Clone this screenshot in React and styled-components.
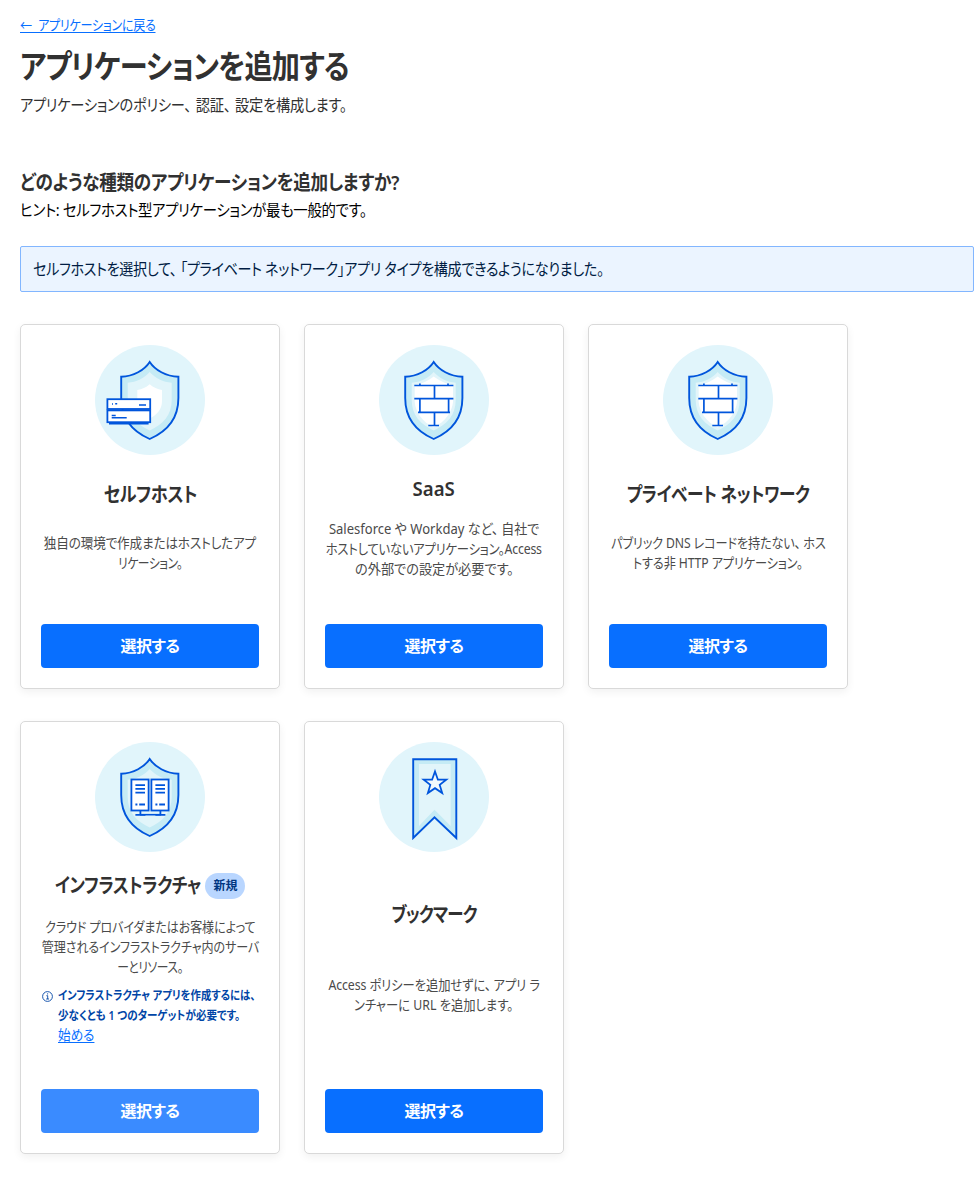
import React, { Fragment } from 'react';
import styled, { createGlobalStyle } from 'styled-components';

const GlobalStyle = createGlobalStyle`
  * { box-sizing: border-box; }
  body {
    margin: 0;
    background: #fff;
    color: #313131;
    font-family: "Noto Sans", "Noto Sans CJK JP", sans-serif;
    font-size: 16px;
    font-feature-settings: "palt";
    overflow-x: hidden;
  }
  h1, h2, h3, p { margin: 0; }
`;

const Page = styled.main`
  display: flex;
  flex-direction: column;
  padding: 15px 4px 36px 20px;
`;

/* A single line of text set in condensed proportional kana. */
const Condensed = styled.span`
  display: inline-block;
  margin: 0 ${(p) => -(p.$inset || 0)}px;
  letter-spacing: ${(p) => p.$track || 0}px;
  white-space: nowrap;
  transform: scaleX(${(p) => p.$scale || 1});
  transform-origin: ${(p) => (p.$centered ? 'center' : 'left')};
`;

const Comma = styled.span`
  padding-right: ${(p) => p.$pause}px;
`;

const Link = styled.a`
  align-self: flex-start;
  font-size: 14px;
  line-height: 20px;
  color: #086fff;
  ${Condensed} {
    text-decoration: underline;
    text-underline-offset: 2px;
    word-spacing: 4px;
  }
`;

const PageTitle = styled.h1`
  margin-top: 11px;
  font-size: 32px;
  line-height: 40px;
  font-weight: 600;
`;

const Lead = styled.p`
  margin-top: 7px;
  line-height: 24px;
`;

const Question = styled.h2`
  margin-top: 52px;
  font-size: 20px;
  line-height: 28px;
  font-weight: 600;
`;

const Hint = styled.p`
  margin-top: 1px;
  line-height: 24px;
  color: #000;
`;

const Banner = styled.div`
  margin-top: 24px;
  height: 46px;
  padding: 0 12px 2px;
  display: flex;
  align-items: center;
  border: 1px solid #82b6ff;
  border-radius: 2px;
  background: #ebf4ff;
  color: #001c43;
`;

const CardGrid = styled.div`
  margin-top: 32px;
  display: grid;
  grid-template-columns: repeat(3, 260px);
  grid-template-rows: 365px 433px;
  gap: 32px 24px;
`;

const Card = styled.section`
  display: flex;
  flex-direction: column;
  justify-content: space-between;
  align-items: center;
  padding: 20px;
  border: 1px solid #d9d9d9;
  border-radius: 5px;
  background: #fff;
  box-shadow: 0 3px 8px rgba(0, 0, 0, 0.06);
`;

const CardTitle = styled.h3`
  display: flex;
  align-items: center;
  gap: 5px;
  height: 31px;
  padding-top: 2px;
  font-size: 20px;
  line-height: 29px;
  font-weight: 600;
`;

const Badge = styled.span`
  display: inline-flex;
  align-items: center;
  justify-content: center;
  width: 40px;
  height: 26px;
  border-radius: 13px;
  background: #b9d6ff;
  color: #003681;
  font-size: 12px;
  font-weight: 600;
`;

const Body = styled.div`
  display: flex;
  flex-direction: column;
  gap: 9px;
  align-self: stretch;
`;

const Description = styled.p`
  display: flex;
  flex-direction: column;
  align-items: center;
  font-size: 14px;
  line-height: 20px;
  color: #4a4a4a;
`;

const Notice = styled.div`
  display: flex;
  gap: 5px;
  padding-left: 1px;
  color: #0045a6;
  font-size: 12px;
  line-height: 20px;
  font-weight: 600;
  svg { flex: none; margin-top: 5px; }
`;

const NoticeText = styled.div`
  display: flex;
  flex-direction: column;
  align-items: flex-start;
  a { font-weight: 400; line-height: 18px; }
`;

const SelectButton = styled.button`
  flex: none;
  align-self: stretch;
  height: 44px;
  margin-top: 28px;
  padding: 0 0 2px;
  border: 0;
  border-radius: 4px;
  background: ${(p) => (p.disabled ? '#3a8bff' : '#086fff')};
  color: #fff;
  font: inherit;
  font-feature-settings: inherit;
  font-weight: 600;
`;

const Art = styled.svg`
  display: block;
  flex: none;
  width: 110px;
  height: 110px;
`;

const INK = '#0055dc';
const SHIELD =
  'M54.7 17 C49.5 25 38.5 31.5 26.2 31.8 V53 C26.2 74 37.5 86.5 54.7 94 C72 86.5 83.4 74 83.4 53 V31.8 C71 31.5 60 25 54.7 17Z';

const Shield = ({ children }) => (
  <>
    <path d={SHIELD} fill="#c5ebf5" stroke={INK} strokeWidth="1.9" />
    <path
      d="M54.7 27 C49 33.5 41.5 37 32.7 37.8 V55 C32.7 70 41.5 79.5 54.7 85.5 C68 79.5 76.7 70 76.7 55 V37.8 C68 37 60.5 33.5 54.7 27Z"
      fill="#e2f5fa"
    />
    {children}
  </>
);

const ServerShield = () => (
  <Shield>
    <path d="M54.7 39.3 C51 42.5 47 44.5 42.3 45 V56 C42.3 64 47 69.5 54.7 73.5 C62.5 69.5 67 64 67 56 V45 C62.5 44.5 58.5 42.5 54.7 39.3Z" fill="#fff" />
    <g stroke={INK} fill="#fff" strokeWidth="1.8">
      <rect x="12.4" y="54.2" width="42.8" height="9.8" />
      <rect x="12.4" y="65.4" width="42.8" height="11.8" />
      <path d="M14 78.4H53.6" strokeWidth="2.2" />
      <path d="M17 59h1M20.2 58.8h2M44 60h7M16.7 70.5h4M16.7 72.7h15" strokeWidth="1.5" />
    </g>
  </Shield>
);

const WallShield = () => (
  <Shield>
    <path d="M54.7 31.5 C49 36 43 39 35.7 40.3 V57 C36.5 67 43 76.5 54.7 82.5 C66.5 76.5 73 67 74 57 V40.3 C67 39 60.5 36 54.7 31.5Z" fill="#fff" />
    <path
      d="M35.3 40.5H74.4M35.3 53.6H74.4M39 67.4H71M49.3 80.5H60M55.5 40.5V53.6M40.9 53.6V67.4M69.6 53.6V67.4M55.5 67.4V80.5M40.9 38.5V40.5M69 38.5V40.5"
      fill="none"
      stroke={INK}
      strokeWidth="1.7"
    />
  </Shield>
);

const RackShield = () => (
  <Shield>
    {[36.4, 56.4].map((x) => (
      <g key={x} transform={`translate(${x} 37.5)`} stroke={INK} strokeWidth="1.8">
        <rect width="17.2" height="31" fill="#fff" />
        <path d="M4 5.6h9.6M4 9.3h9.6M4 13.2h9.6M7.8 25h5.8M4 25h2" />
        <path d="M9 31v4.5M4 35.4h10" />
      </g>
    ))}
    <path d="M45 72.7H66" stroke={INK} strokeWidth="1.6" />
  </Shield>
);

const Bookmark = () => (
  <>
    <path d="M34.2 17.2H77.3V96L55.5 75.3 34.2 96Z" fill="#c5ebf5" stroke={INK} strokeWidth="1.9" />
    <path d="M40 22H71.7V84L55.5 67.8 40 84Z" fill="#e2f5fa" />
    <path
      d="M56 29.5l2.9 8.2h8.4l-6.6 5.2 2.5 8.2-7.2-4.9-7.1 4.9 2.4-8.2-6.6-5.2h8.4Z"
      fill="#f2fafd"
      stroke={INK}
      strokeWidth="1.8"
    />
  </>
);

const InfoIcon = () => (
  <svg width="11" height="11" viewBox="0 0 11 11" fill="none" stroke="#0045a6" strokeWidth="0.9">
    <circle cx="5.5" cy="5.5" r="4.9" />
    <path d="M4.4 4.7h1.3V8M4.2 8h2.8M5 2.9h1.1" />
  </svg>
);

const line = (text, scale, track = 0, extra = {}) => ({ text, scale, track, ...extra });

const CARDS = [
  {
    art: ServerShield,
    title: line('セルフホスト', 0.86, -0.5),
    lines: [
      line('独自の環境で作成またはホストしたアプ', 0.9, -0.16),
      line('リケーション。', 0.84, -0.5),
    ],
  },
  {
    art: WallShield,
    title: line('SaaS', 0.93),
    lines: [
      line('Salesforce や Workday など、自社で', 0.93, 0, { pause: 3 }),
      line('ホストしていないアプリケーション。Access', 0.88, -0.24),
      line('の外部での設定が必要です。', 0.94),
    ],
  },
  {
    art: WallShield,
    title: line('プライベート ネットワーク', 0.83, -0.37),
    lines: [
      line('パブリック DNS レコードを持たない、ホス', 0.87, -0.16, { pause: 3 }),
      line('トする非 HTTP アプリケーション。', 0.87, -0.13),
    ],
  },
  {
    art: RackShield,
    title: line('インフラストラクチャ', 0.84, -0.45, { inset: 14 }),
    badge: '新規',
    lines: [
      line('クラウド プロバイダまたはお客様によって', 0.86, -0.1),
      line('管理されるインフラストラクチャ内のサーバ', 0.86, -0.08),
      line('ーとリソース。', 0.84, -0.5),
    ],
    notice: [
      line('インフラストラクチャ アプリを作成するには、', 0.86),
      line('少なくとも 1 つのターゲットが必要です。', 0.88),
    ],
    disabled: true,
  },
  {
    art: Bookmark,
    title: line('ブックマーク', 0.82, -0.8),
    lines: [
      line('Access ポリシーを追加せずに、アプリ ラ', 0.88, -0.1, { pause: 3 }),
      line('ンチャーに URL を追加します。', 0.88),
    ],
  },
];

const withPauses = (text, pause) =>
  text.split('、').map((part, i) => (
    <Fragment key={part}>
      {i > 0 && <Comma $pause={pause}>、</Comma>}
      {part}
    </Fragment>
  ));

const Line = ({ item, centered }) => (
  <Condensed $scale={item.scale} $track={item.track} $inset={item.inset} $centered={centered}>
    {item.pause ? withPauses(item.text, item.pause) : item.text}
  </Condensed>
);

const AppCard = ({ art: Drawing, title, badge, lines, notice, disabled }) => (
  <Card>
    <Art viewBox="0 0 110 110">
      <circle cx="55" cy="55" r="55" fill="#e1f5fb" />
      <Drawing />
    </Art>
    <CardTitle>
      <Line item={title} centered />
      {badge && <Badge>{badge}</Badge>}
    </CardTitle>
    <Body>
      <Description>
        {lines.map((l) => <Line key={l.text} item={l} centered />)}
      </Description>
      {notice && (
        <Notice>
          <InfoIcon />
          <NoticeText>
            {notice.map((l) => <Line key={l.text} item={l} />)}
            <Link><Condensed $scale={0.9}>始める</Condensed></Link>
          </NoticeText>
        </Notice>
      )}
    </Body>
    <SelectButton disabled={disabled}>
      <Condensed $track={-0.5}>選択する</Condensed>
    </SelectButton>
  </Card>
);

export default function App() {
  return (
    <Page>
      <GlobalStyle />
      <Link><Line item={line('← アプリケーションに戻る', 0.86, -0.3)} /></Link>
      <PageTitle><Line item={line('アプリケーションを追加する', 0.88, -0.9)} /></PageTitle>
      <Lead><Line item={line('アプリケーションのポリシー、認証、設定を構成します。', 0.89, -0.28, { pause: 5 })} /></Lead>
      <Question><Line item={line('どのような種類のアプリケーションを追加しますか?', 0.88, -0.32)} /></Question>
      <Hint><Line item={line('ヒント: セルフホスト型アプリケーションが最も一般的です。', 0.9, -0.36)} /></Hint>
      <Banner>
        <Line item={line('セルフホストを選択して、「プライベート ネットワーク」アプリ タイプを構成できるようになりました。', 0.88, -0.35, { pause: 4 })} />
      </Banner>
      <CardGrid>
        {CARDS.map((c) => <AppCard key={c.title.text} {...c} />)}
      </CardGrid>
    </Page>
  );
}
